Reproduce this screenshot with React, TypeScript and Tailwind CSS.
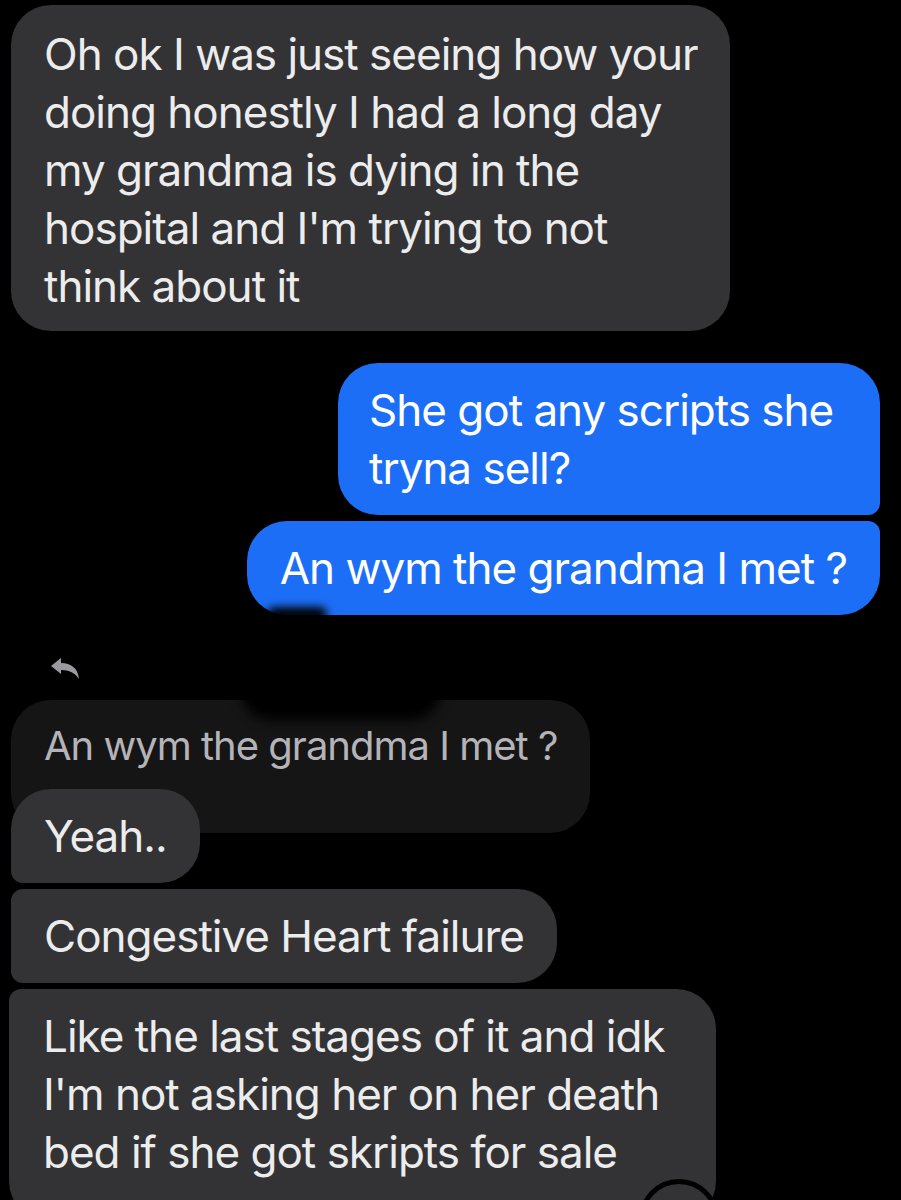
import React from "react";

const gray = "bg-[#333335] text-[#ececec]";
const blue = "bg-[#1d6ef6] text-white";

export default function App() {
  return (
    <div
      className="relative w-[901px] h-[1200px] overflow-hidden bg-black text-[44px] leading-[58px] tracking-[-1px]"
      style={{ fontFamily: "Inter, 'Noto Sans', sans-serif" }}
    >
      <div className="flex flex-col pt-[5px]">
        <div className={`self-start ml-[11px] rounded-[40px] px-[33px] pt-[20px] pb-[16px] ${gray}`}>
          Oh ok I was just seeing how your
          <br />
          doing honestly I had a long day
          <br />
          my grandma is dying in the
          <br />
          hospital and I'm trying to not
          <br />
          think about it
        </div>

        <div className={`self-end mr-[21px] mt-[32px] w-[542px] rounded-[40px] rounded-br-[12px] pl-[31px] pr-[20px] py-[18px] ${blue}`}>
          She got any scripts she
          <br />
          tryna sell?
        </div>
        <div className={`relative self-end mr-[21px] mt-[6px] rounded-[40px] rounded-tr-[12px] px-[33px] py-[18px] ${blue}`}>
          An wym the grandma I met ?
          <div className="absolute left-[20px] bottom-[-6px] h-[14px] w-[60px] rounded-full bg-black blur-[4px]" />
        </div>

        <div className="h-[85px] pl-[48px] pt-[40px]">
          <svg width="36" height="30" viewBox="0 0 36 30">
            <path
              d="M3 11 L13 3 L13 8 C23 8 30 13 31 24 C27 18 21 15 13 15 L13 19 Z"
              fill="#9a9a9e"
            />
          </svg>
        </div>

        <div className="relative self-start ml-[11px] h-[133px] rounded-[40px] bg-[#151515] pl-[33px] pr-[33px] pt-[20px] text-[40px] leading-[52px] text-[#b4b4b8]">
          An wym the grandma I met ?
          <div className="absolute left-[230px] top-[-40px] h-[60px] w-[200px] rounded-full bg-black blur-[6px]" />
        </div>

        <div className={`relative z-10 self-start ml-[11px] mt-[-44px] rounded-[40px] rounded-bl-[12px] px-[33px] py-[18px] ${gray}`}>
          Yeah..
        </div>
        <div className={`self-start ml-[11px] mt-[6px] rounded-[40px] rounded-tl-[12px] rounded-bl-[12px] px-[33px] py-[18px] ${gray}`}>
          Congestive Heart failure
        </div>
        <div className={`relative self-start ml-[9px] mt-[6px] w-[707px] rounded-[40px] rounded-tl-[12px] pl-[34px] pr-[20px] pt-[18px] pb-[40px] ${gray}`}>
          Like the last stages of it and idk
          <br />
          I'm not asking her on her death
          <br />
          bed if she got skripts for sale
          <div className="absolute left-[630px] top-[190px] h-[80px] w-[80px] rounded-full border-[5px] border-black bg-[#333335]" />
        </div>
      </div>
    </div>
  );
}
